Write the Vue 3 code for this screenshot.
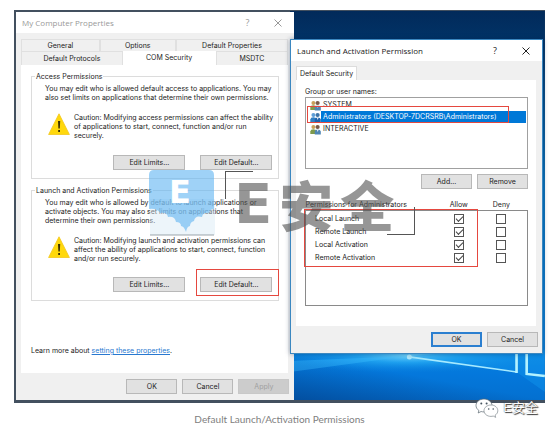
<script setup>
import { reactive } from 'vue'

const tabsTop = ['General', 'Options', 'Default Properties']
const tabsBottom = ['Default Protocols', 'COM Security', 'MSDTC']

const groups = [
  {
    title: 'Access Permissions',
    intro: ['You may edit who is allowed default access to applications. You may', 'also set limits on applications that determine their own permissions.'],
    caution: ['Caution: Modifying access permissions can affect the ability', 'of applications to start, connect, function and/or run', 'securely.'],
    marked: false
  },
  {
    title: 'Launch and Activation Permissions',
    intro: ['You may edit who is allowed by default to launch applications or', 'activate objects. You may also set limits on applications that', 'determine their own permissions.'],
    caution: ['Caution: Modifying launch and activation permissions can', 'affect the ability of applications to start, connect, function', 'and/or run securely.'],
    marked: true
  }
]

const users = [
  { name: 'SYSTEM', selected: false },
  { name: 'Administrators (DESKTOP-7DCRSRB\\Administrators)', selected: true },
  { name: 'INTERACTIVE', selected: false }
]

const permissions = reactive([
  { name: 'Local Launch', allow: true, deny: false },
  { name: 'Remote Launch', allow: true, deny: false },
  { name: 'Local Activation', allow: true, deny: false },
  { name: 'Remote Activation', allow: true, deny: false }
])
</script>

<template>
  <figure class="figure">
    <div class="desktop">
      <svg class="wallpaper" viewBox="0 0 252 388" preserveAspectRatio="none" aria-hidden="true">
        <defs>
          <linearGradient id="sky" x1="0" y1="0" x2="0" y2="1">
            <stop offset="0" stop-color="#022a5a" />
            <stop offset="0.08" stop-color="#013468" />
            <stop offset="0.45" stop-color="#0878c4" />
            <stop offset="0.88" stop-color="#0a84e0" />
            <stop offset="0.93" stop-color="#0478dc" />
            <stop offset="1" stop-color="#0470d0" />
          </linearGradient>
          <radialGradient id="glow" cx="0.5" cy="0.5" r="0.5">
            <stop offset="0" stop-color="#7fdcff" stop-opacity="0.9" />
            <stop offset="0.4" stop-color="#2cb4f8" stop-opacity="0.6" />
            <stop offset="1" stop-color="#0a84e0" stop-opacity="0" />
          </radialGradient>
          <linearGradient id="shade" x1="0" y1="1" x2="1" y2="0">
            <stop offset="0" stop-color="#02408a" stop-opacity="0.7" />
            <stop offset="0.5" stop-color="#02408a" stop-opacity="0" />
          </linearGradient>
        </defs>
        <rect width="252" height="388" fill="url(#sky)" />
        <rect y="340" width="252" height="48" fill="url(#shade)" />
        <ellipse cx="117" cy="344" rx="130" ry="17" fill="url(#glow)" />
        <path d="M0 360 117 344 0 349Z" fill="#3fc0ff" opacity="0.35" />
        <path d="M117 344 190 339 252 338V380L224 360Z" fill="#18a0f4" opacity="0.35" />
        <circle cx="118" cy="345" r="2.5" fill="#c8f2ff" opacity="0.8" />
        <path d="M118 345 224 360" stroke="#a6eaff" stroke-width="1.6" />
        <path d="M224 338V361M234 338V362L252 364" stroke="#b4f2ff" stroke-width="2.6" fill="none" />
      </svg>

      <section class="window properties">
        <header class="titlebar muted">
          <h2>My Computer Properties</h2>
          <button class="tool" aria-label="Help">?</button>
          <button class="tool" aria-label="Close">
            <svg viewBox="0 0 8 8"><path d="M0.5 0.5 7.5 7.5M7.5 0.5 0.5 7.5" /></svg>
          </button>
        </header>
        <div class="body">
          <nav class="tabs upper">
            <button v-for="t in tabsTop" :key="t">{{ t }}</button>
          </nav>
          <nav class="tabs lower">
            <button v-for="t in tabsBottom" :key="t" :class="{ active: t === 'COM Security' }">{{ t }}</button>
          </nav>
          <div class="page">
            <fieldset v-for="g in groups" :key="g.title" :class="{ second: g.marked }">
              <legend>{{ g.title }}</legend>
              <p class="intro"><span v-for="l in g.intro" :key="l">{{ l }}</span></p>
              <div class="caution">
                <svg viewBox="0 0 22 22" aria-hidden="true">
                  <path d="M11 0.8 21.4 21.5H0.6Z" fill="#ffd80c" stroke="#f3c61c" stroke-width="0.8" stroke-linejoin="round" />
                  <path d="M10 8h2.2l-0.4 7.4h-1.4ZM10.2 17h1.8v2h-1.8Z" fill="#3a3000" />
                </svg>
                <p><span v-for="l in g.caution" :key="l">{{ l }}</span></p>
              </div>
              <div class="actions">
                <button class="btn">Edit Limits...</button>
                <span class="spot">
                  <button class="btn">Edit Default...</button>
                  <i v-if="g.marked" class="mark"></i>
                </span>
              </div>
            </fieldset>
            <p class="more">Learn more about <a href="#properties">setting these properties</a>.</p>
          </div>
        </div>
        <footer>
          <button class="btn">OK</button>
          <button class="btn">Cancel</button>
          <button class="btn" disabled>Apply</button>
        </footer>
      </section>

      <section class="window permission">
        <header class="titlebar">
          <h2>Launch and Activation Permission</h2>
          <button class="tool" aria-label="Help">?</button>
          <button class="tool" aria-label="Close">
            <svg viewBox="0 0 8 8"><path d="M0.5 0.5 7.5 7.5M7.5 0.5 0.5 7.5" /></svg>
          </button>
        </header>
        <div class="body">
          <nav class="tabs single"><button class="active">Default Security</button></nav>
          <div class="page">
            <p id="names">Group or user names:</p>
            <div class="users">
              <ul role="listbox" aria-labelledby="names">
                <li v-for="u in users" :key="u.name" role="option" :aria-selected="u.selected" :class="{ selected: u.selected }">
                  <svg viewBox="0 0 11 11" aria-hidden="true">
                    <circle cx="3.4" cy="3" r="2" :fill="u.selected ? '#5f9fd8' : '#c9a05a'" />
                    <path d="M0.3 10V7.4Q0.6 5.2 3.4 5.2T6.4 7.4V10Z" :fill="u.selected ? '#2f7fc4' : '#7e9a4c'" />
                    <circle cx="7.6" cy="3" r="2.1" :fill="u.selected ? '#3c74a8' : '#7a5a48'" />
                    <path d="M4.8 10.6V7.6Q5 5.5 7.7 5.5T10.8 7.6V10.6Z" :fill="u.selected ? '#1d62ac' : '#4f86b4'" />
                    <path d="M6.8 5.5h1.8L7.7 8Z" fill="#f4f4f4" />
                  </svg>
                  <span>{{ u.name }}</span>
                </li>
              </ul>
              <i class="mark"></i>
            </div>
            <div class="actions">
              <button class="btn">Add...</button>
              <button class="btn">Remove</button>
            </div>
            <div class="rights">
              <table>
                <thead>
                  <tr><th scope="col">Permissions for Administrators</th><th scope="col">Allow</th><th scope="col">Deny</th></tr>
                </thead>
                <tbody>
                  <tr v-for="p in permissions" :key="p.name">
                    <th scope="row">{{ p.name }}</th>
                    <td><input v-model="p.allow" type="checkbox" :aria-label="'Allow ' + p.name"></td>
                    <td><input v-model="p.deny" type="checkbox" :aria-label="'Deny ' + p.name"></td>
                  </tr>
                  <tr class="rest"><td colspan="3"></td></tr>
                </tbody>
              </table>
              <i class="mark"></i>
            </div>
          </div>
        </div>
        <footer>
          <button class="btn primary">OK</button>
          <button class="btn">Cancel</button>
        </footer>
      </section>

      <div class="watermark">
        <svg class="badge" viewBox="0 0 68 68" aria-hidden="true">
          <rect x="2" y="30" width="65" height="36" fill="#d6e8f5" opacity="0.45" />
          <path d="M6 1H61Q66 1 66 6V40Q62 40 61 44Q55 43 54 48Q47 46 46 52Q42 53 42 57Q39 57 38 63Q36 57 33 57Q33 53 28 53Q27 47 20 48Q19 43 12 44Q9 39 1 40V6Q1 1 6 1Z" fill="#5fb4f2" opacity="0.6" />
          <path d="M2 66H66" stroke="#77828a" stroke-width="1.2" opacity="0.7" />
          <text x="32" y="34" text-anchor="middle" class="letter">E</text>
        </svg>
        <div class="wordmark">
          <span class="latin">E</span><span>安</span><span>全</span>
        </div>
        <i class="corner start"></i>
        <i class="corner end"></i>
      </div>
    </div>

    <figcaption>Default Launch/Activation Permissions</figcaption>

    <div class="source">
      <svg viewBox="0 0 24 20" aria-hidden="true">
        <path d="M9 1C4.500 1 1 3.900 1 7.500c0 2 1.100 3.800 2.900 5L3.200 15l2.900-1.500c.9.300 1.900.4 2.900.4 4.500 0 8-2.900 8-6.400S13.500 1 9 1Z" fill="#fff" stroke="#59656e" stroke-width="0.7" />
        <path d="M16 7c-3.900 0-7 2.500-7 5.700s3.100 5.700 7 5.700c.8 0 1.600-.1 2.300-.3l2.400 1.300-.6-2.200c1.700-1 2.700-2.600 2.700-4.500C22.800 9.500 19.900 7 16 7Z" fill="#fff" stroke="#7e878d" stroke-width="0.7" />
        <g fill="#46545f"><circle cx="6.300" cy="5.500" r="1" /><circle cx="11.600" cy="5.500" r="1" /><circle cx="13.700" cy="11" r="0.800" /><circle cx="18.200" cy="11" r="0.800" /></g>
      </svg>
      <span>E安全</span>
    </div>
  </figure>
</template>

<style>
body {
  margin: 0;
  background: #fff;
}
</style>

<style scoped>
* {
  box-sizing: border-box;
}
.figure {
  position: relative;
  margin: 0;
  padding: 10px 9px 0 14px;
  font: 7px/9px Inter, "Liberation Sans", sans-serif;
  color: #222;
}
p, h2, ul {
  margin: 0;
  padding: 0;
  font-weight: 400;
}
button {
  margin: 0;
  padding: 0;
  border: 0;
  background: none;
  font: inherit;
  color: inherit;
  white-space: nowrap;
}
.desktop {
  position: relative;
  padding: 2px 0 3px 2px;
  background: #43505f;
}
.wallpaper {
  position: absolute;
  top: 1px;
  right: 0;
  width: 48%;
  height: calc(100% - 4px);
}
.window {
  display: flex;
  flex-direction: column;
  background: #f0f0f0;
}
.properties {
  position: relative;
  width: calc(53% - 2px);
}
.permission {
  position: absolute;
  top: 29px;
  left: 52%;
  right: 2px;
  border: 1px solid #3b87c0;
  box-shadow: 0 0 5px rgba(0, 30, 70, 0.4);
}
.titlebar {
  display: flex;
  align-items: center;
  height: 21px;
  padding: 0 12px 0 6px;
  background: #fff;
  font: 8px/12px "Open Sans", "Noto Sans", sans-serif;
  color: #222;
}
.titlebar.muted {
  color: #999;
}
.titlebar h2 {
  flex: 1;
  font-size: 8px;
  white-space: nowrap;
}
.tool {
  display: grid;
  place-items: center;
  width: 8px;
  margin-left: 23px;
  font-size: 9px;
}
.tool svg {
  width: 8px;
  height: 8px;
  fill: none;
  stroke: currentColor;
}
.body {
  padding: 6px 6px 0 5px;
}
.permission .body {
  padding: 5px 6px 0 5px;
}
.tabs {
  display: grid;
}
.tabs button {
  height: 12px;
  border: 1px solid #e0e0e0;
  border-bottom: 0;
}
.upper {
  grid-template-columns: 79fr 76fr 113fr;
}
.lower {
  grid-template-columns: 102fr 93fr 73fr;
}
.lower button {
  height: 14px;
}
.tabs .active {
  background: #fff;
  border-color: #fff;
}
.lower .active {
  padding-bottom: 3px;
}
.single {
  grid-template-columns: 61px;
}
.single .active {
  height: 14px;
  border-color: #dcdcdc;
}
.page {
  background: #fff;
}
.properties .page {
  min-height: 308px;
  padding: 7px 9px 0 10px;
}
fieldset {
  min-width: 0;
  margin: 0;
  padding: 3px 6px 8px 13px;
  border: 1px solid #dcdcdc;
}
fieldset.second {
  margin-top: 7px;
}
legend {
  margin-left: -10px;
  padding: 0 1px;
}
p span {
  display: block;
  white-space: nowrap;
}
.caution {
  display: flex;
  gap: 4px;
  margin: 11px 0 15px 3px;
}
.second .caution {
  margin-bottom: 14px;
}
.caution svg {
  flex: none;
  width: 22px;
  height: 22px;
}
.actions {
  display: flex;
  justify-content: flex-end;
  gap: 15px;
}
.btn {
  width: 51px;
  height: 15px;
  border: 1px solid #b8b8b8;
  background: #e1e1e1;
}
fieldset .btn {
  width: 72px;
}
.btn:disabled {
  border-color: #c8c8c8;
  background: #ccc;
  color: #a0a0a0;
}
.btn.primary {
  border: 2px solid #2b7fd0;
}
.spot {
  position: relative;
  display: flex;
}
.mark {
  position: absolute;
  border: 1px solid #e5483f;
  pointer-events: none;
}
.spot .mark {
  inset: -8px -7px -4px -4px;
}
.more {
  margin-top: 45px;
}
.more a {
  color: #2878d0;
}
footer {
  display: flex;
  justify-content: flex-end;
  gap: 5px;
  padding: 6px 5px;
}
.permission footer {
  padding-right: 4px;
}
.permission .page {
  min-height: 246px;
  padding: 7px 8px 0 9px;
}
.users {
  position: relative;
  height: 72px;
  margin: 1px 0 5px;
  padding: 1px;
  border: 1px solid #a0a0a0;
}
.users ul {
  list-style: none;
}
.users li {
  display: flex;
  align-items: center;
  height: 12px;
  padding-left: 3px;
}
.users svg {
  flex: none;
  width: 11px;
  height: 11px;
}
.users span {
  flex: 1;
  padding-left: 2px;
  line-height: 12px;
  white-space: nowrap;
}
.users .selected span {
  background: #0078d7;
  color: #fff;
}
.users .mark {
  top: 8px;
  left: 1px;
  right: 18px;
  height: 17px;
}
.permission .page .actions {
  gap: 5px;
}
.rights {
  position: relative;
  margin-top: 10px;
}
table {
  width: 100%;
  border-collapse: collapse;
  table-layout: fixed;
}
th, td {
  height: 13px;
  padding: 0;
  font-weight: 400;
  text-align: center;
}
th:first-child {
  width: 58%;
  text-align: left;
}
thead th {
  height: 11px;
}
thead th:nth-child(2) {
  width: 22%;
}
tbody {
  border: 1px solid #8a8a8a;
}
tbody th {
  padding-left: 9px;
}
tbody tr:first-child > * {
  height: 15px;
  padding-top: 2px;
}
thead th:nth-child(3), tbody td:nth-child(3) {
  padding-right: 8px;
}
.rest td {
  height: 41px;
}
.rights input {
  display: block;
  appearance: none;
  width: 10px;
  height: 10px;
  margin: 0 auto;
  border: 1px solid #555;
  background: #fff;
}
.rights input:checked::before {
  content: "";
  display: block;
  width: 6px;
  height: 3px;
  margin: 1px;
  border: solid #444;
  border-width: 0 0 1px 1px;
  transform: rotate(-45deg);
}
.rights .mark {
  top: 10px;
  left: -1px;
  width: 78%;
  height: 58px;
}
.watermark {
  position: absolute;
  top: 159px;
  left: 134px;
  display: flex;
  align-items: flex-start;
  gap: 18px;
  pointer-events: none;
}
.badge {
  width: 68px;
  height: 68px;
}
.letter {
  font: 700 32px "DejaVu Sans", sans-serif;
  fill: #fff;
}
.wordmark {
  display: flex;
  gap: 7px;
  padding-top: 8px;
  font: 900 54px/54px "Noto Sans CJK SC", sans-serif;
  color: rgba(80, 80, 80, 0.6);
}
.wordmark .latin {
  font: 700 56px/54px "DejaVu Sans", sans-serif;
}
.corner {
  position: absolute;
  width: 28px;
  height: 28px;
  border: solid #555;
}
.corner.start {
  top: 2px;
  left: 77px;
  border-width: 1px 0 0 1px;
}
.corner.end {
  top: 38px;
  left: 239px;
  border-width: 0 1px 1px 0;
}
figcaption {
  padding: 9px 0 6px;
  font: 10px/14px Lato, sans-serif;
  color: #808080;
  text-align: center;
}
.source {
  position: absolute;
  right: 16px;
  bottom: 14px;
  display: flex;
  align-items: center;
  gap: 4px;
  font: 13px/20px "Liberation Sans", "Noto Sans CJK SC", sans-serif;
  color: #fff;
  text-shadow: 1px 1px 1px #333, 0 0 1px #444;
}
.source svg {
  width: 24px;
  height: 20px;
}
</style>
